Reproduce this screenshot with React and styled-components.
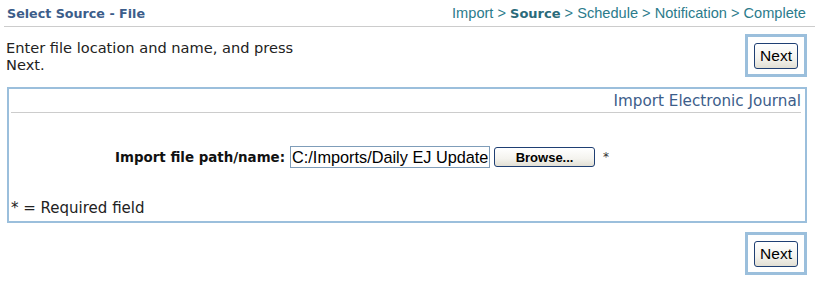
import styled, { createGlobalStyle } from 'styled-components';

const GlobalStyle = createGlobalStyle`
    body {
        margin: 0;
        background: #ffffff;
        font-family: "DejaVu Sans", Verdana, sans-serif;
    }
`;

const steps = ['Import', 'Source', 'Schedule', 'Notification', 'Complete'];
const current = 'Source';

const NextButton = () => (
    <NextBox>
        <Button>Next</Button>
    </NextBox>
);

const App = () => {
    return (
        <Page>
            <GlobalStyle />
            <Header>
                <Title>Select Source - File</Title>
                <Crumbs>
                    {steps.map((step, i) => (
                        <span key={step}>
                            {i > 0 && ' > '}
                            <Crumb $active={step === current}>{step}</Crumb>
                        </span>
                    ))}
                </Crumbs>
            </Header>
            <IntroRow>
                <Intro>Enter file location and name, and press Next.</Intro>
                <NextButton />
            </IntroRow>
            <Panel>
                <PanelHead>Import Electronic Journal</PanelHead>
                <FormRow>
                    <Label htmlFor="path">Import file path/name:</Label>
                    <PathInput id="path" defaultValue="C:/Imports/Daily EJ Update" />
                    <BrowseButton>Browse...</BrowseButton>
                    <Star>*</Star>
                </FormRow>
                <Required>* = Required field</Required>
            </Panel>
            <BottomRow>
                <NextButton />
            </BottomRow>
        </Page>
    );
};

export default App;

const Page = styled.div`
    width: 815px;
`;

const Header = styled.div`
    height: 26px;
    margin-left: 4px;
    padding: 0 9px 0 3px;
    display: flex;
    align-items: center;
    justify-content: space-between;
    border-bottom: 1px solid #cccccc;
`;

const Title = styled.div`
    font-family: "DejaVu Sans", Verdana, sans-serif;
    font-weight: bold;
    font-size: 12.7px;
    color: #3c5d8a;
`;

const Crumbs = styled.div`
    font-family: "Liberation Sans", Arial, sans-serif;
    font-size: 14.6px;
    color: #2b7b8b;
    white-space: pre;
`;

const Crumb = styled.span`
    font-family: ${p => p.$active ? '"DejaVu Sans", Verdana, sans-serif' : 'inherit'};
    font-weight: ${p => p.$active ? 'bold' : 'normal'};
    font-size: ${p => p.$active ? '13px' : '14.6px'};
    color: ${p => p.$active ? '#2a6a7a' : '#2b7b8b'};
`;

const IntroRow = styled.div`
    display: flex;
    justify-content: space-between;
    align-items: flex-start;
    padding: 7px 8px 0 6px;
`;

const Intro = styled.div`
    width: 300px;
    margin-top: 5px;
    font-size: 14.6px;
    line-height: 17px;
    color: #222222;
`;

const NextBox = styled.div`
    border: 3px solid #9bbfdc;
    padding: 6px 6px 5px 6px;
`;

const Button = styled.button`
    width: 44px;
    height: 26px;
    padding: 0;
    border: 1px solid #1f3f73;
    border-radius: 3px;
    background: linear-gradient(#ffffff, #f4f3ee 60%, #e2dfd4);
    font-family: "Liberation Sans", Arial, sans-serif;
    font-size: 15.5px;
    color: #000000;
`;

const Panel = styled.div`
    margin: 10px 8px 0 7px;
    height: 132px;
    border: 2px solid #9bbfdc;
    display: flex;
    flex-direction: column;
`;

const PanelHead = styled.div`
    height: 23px;
    margin: 0 4px 0 2px;
    display: flex;
    align-items: center;
    justify-content: flex-end;
    border-bottom: 1px solid #cccccc;
    font-size: 15.2px;
    color: #3c5d8a;
`;

const FormRow = styled.div`
    margin-top: 33px;
    padding-left: 106px;
    display: flex;
    align-items: center;
    height: 22px;
`;

const Label = styled.label`
    font-weight: bold;
    font-size: 13.4px;
    color: #111111;
    margin-right: 5px;
`;

const PathInput = styled.input`
    box-sizing: border-box;
    width: 200px;
    height: 22px;
    padding: 0 1px;
    border: 1px solid #7f9db9;
    font-family: "Liberation Sans", Arial, sans-serif;
    font-size: 16.3px;
    color: #000000;
    outline: none;
`;

const BrowseButton = styled.button`
    box-sizing: border-box;
    width: 101px;
    height: 20px;
    margin-left: 4px;
    padding: 0;
    border: 1px solid #1f3f73;
    border-radius: 3px;
    background: linear-gradient(#ffffff, #f4f3ee 60%, #e2dfd4);
    font-family: "Liberation Sans", Arial, sans-serif;
    font-weight: bold;
    font-size: 13px;
    color: #000000;
`;

const Star = styled.span`
    margin-left: 8px;
    font-size: 12px;
    color: #333333;
`;

const Required = styled.div`
    margin-top: auto;
    margin-bottom: 4px;
    padding-left: 2px;
    font-size: 15px;
    color: #222222;
`;

const BottomRow = styled.div`
    display: flex;
    justify-content: flex-end;
    padding: 9px 8px 0 0;
`;
